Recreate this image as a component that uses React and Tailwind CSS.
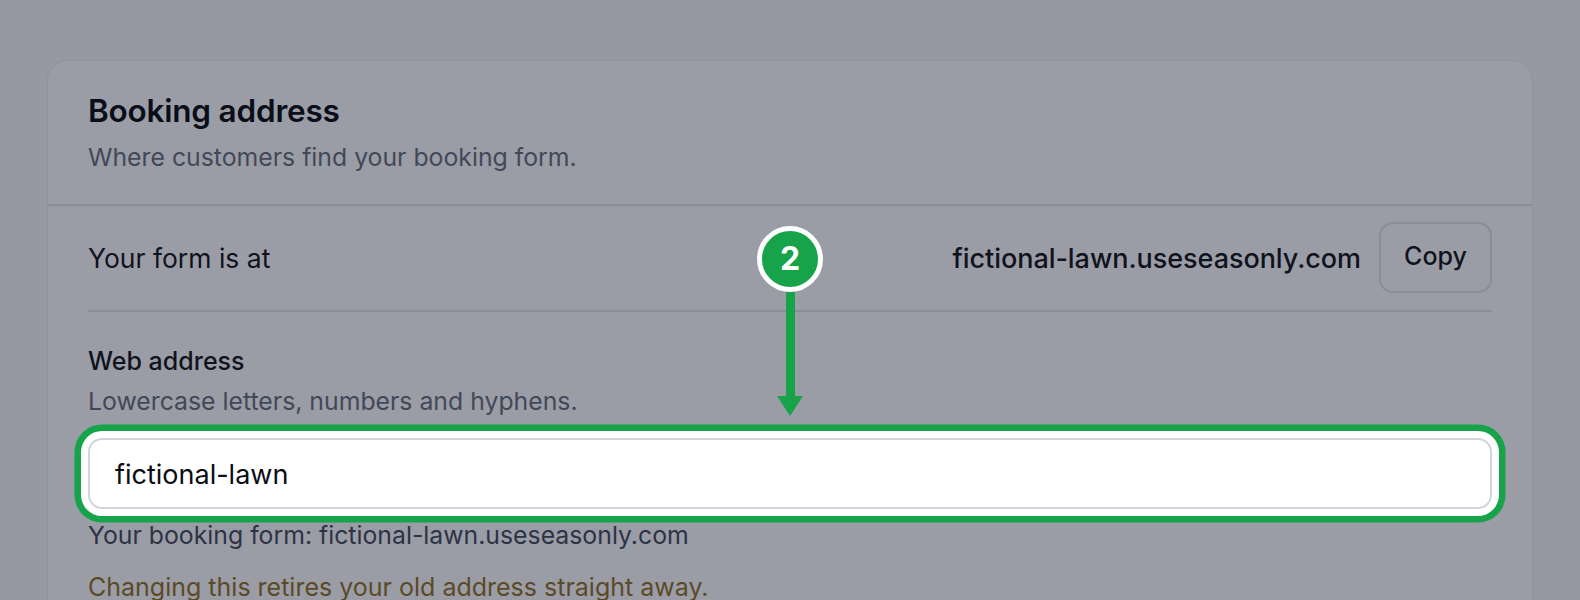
export default function App() {
  return (
    <div className="h-[600px] overflow-hidden bg-[#9699a3] pt-[60px] pl-[47px] pr-[47px] font-['Inter',sans-serif]">
      <div className="relative rounded-t-[20px] border border-[#8f919d] bg-[#9a9da6] pb-10">
        {/* Header */}
        <div className="h-[145px] border-b-2 border-[#8a8d99] px-10 pt-[30px]">
          <h2 className="text-[31.5px] leading-10 font-semibold tracking-[-0.2px] text-[#0a0e18]">Booking address</h2>
          <p className="mt-[10px] text-[24.8px] leading-8 text-[#434858]">Where customers find your booking form.</p>
        </div>

        {/* Current address */}
        <div className="mx-10 flex h-[106px] items-center justify-between border-b-2 border-[#8a8d99]">
          <span className="pt-[2px] text-[26.5px] text-[#10131c]">Your form is at</span>
          <div className="flex items-center gap-[18px]">
            <span className="pt-[2px] text-[27px] font-[450] tracking-[-0.05px] text-[#10131c]">fictional-lawn.useseasonly.com</span>
            <button className="mb-[2px] h-[71px] w-[113px] rounded-[14px] border-2 border-[#8a8d99] text-[25px] font-medium text-[#10131c]">Copy</button>
          </div>
        </div>

        {/* Web address field */}
        <div className="mx-10 pt-[33px]">
          <label className="block text-[25px] leading-8 font-medium text-[#10131c]">Web address</label>
          <p className="mt-[8px] text-[24.8px] leading-8 text-[#434858]">Lowercase letters, numbers and hyphens.</p>
          <div className="mt-[21px] flex h-[71px] items-center rounded-[14px] border-2 border-[#d1d5db] bg-white px-[25px] pt-[3px] text-[27px] text-[#0a0d14] shadow-[0_0_0_7px_#ffffff,0_0_0_13.5px_#16a34a]">
            fictional-lawn
          </div>
          <p className="mt-[10px] text-[24.8px] leading-8 text-[#2d3345]">Your booking form: fictional-lawn.useseasonly.com</p>
          <p className="mt-5 text-[25px] leading-8 text-[#5c4a26]">Changing this retires your old address straight away.</p>
        </div>

        {/* Callout */}
        <div className="absolute left-[709px] top-[165px] flex flex-col items-center">
          <div className="flex h-[66px] w-[66px] items-center justify-center rounded-full border-[5px] border-white bg-[#16a34a] text-[32px] font-bold text-white">2</div>
          <div className="h-[104px] w-[9px] bg-[#16a34a]" />
          <div className="h-0 w-0 border-x-[13px] border-t-[20px] border-x-transparent border-t-[#16a34a]" />
        </div>
      </div>
    </div>
  );
}
